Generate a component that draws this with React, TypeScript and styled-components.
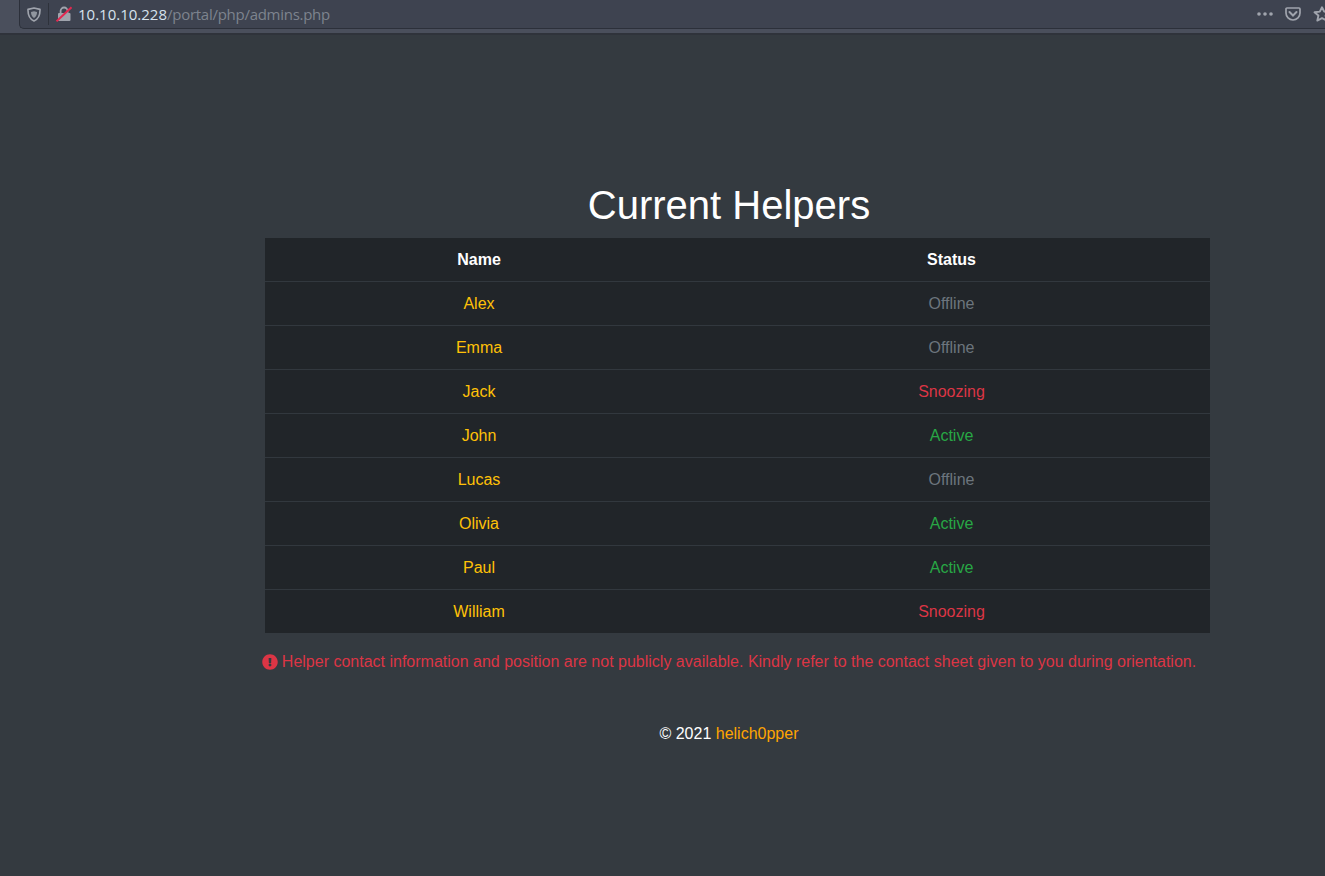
import React from "react";
import styled, { createGlobalStyle } from "styled-components";

const Global = createGlobalStyle`
  html, body { margin: 0; padding: 0; background: #343a40; overflow: hidden; }
  body { font-family: "Liberation Sans", Arial, sans-serif; font-size: 16px; line-height: 24px; color: #fff; }
`;

const Page = styled.div`
  width: 1325px;
  height: 876px;
  overflow: hidden;
  display: flex;
  flex-direction: column;
`;

const Toolbar = styled.div`
  height: 35px;
  flex: none;
  box-sizing: border-box;
  background: #4a4f5c;
  border-bottom: 2px solid #2f333b;
  display: flex;
  align-items: flex-start;
  padding-left: 19px;
  overflow: hidden;
`;

const UrlBar = styled.div`
  flex: none;
  width: 1316px;
  height: 29px;
  box-sizing: border-box;
  background: #3e4350;
  border-left: 1px solid #2c303a;
  border-bottom: 1px solid #2c303a;
  border-bottom-left-radius: 5px;
  display: flex;
  align-items: center;
  font-family: "Open Sans", "Noto Sans", sans-serif;
  font-size: 15px;
  white-space: nowrap;
`;

const IconSlot = styled.span<{ $w: number }>`
  width: ${(p) => p.$w}px;
  flex: none;
  display: flex;
  align-items: center;
  justify-content: center;
`;

const Divider = styled.span`
  width: 1px;
  height: 22px;
  background: #2e323b;
  flex: none;
`;

const Host = styled.span`
  color: #d6e2ee;
`;

const UrlPath = styled.span`
  color: #7d838e;
  letter-spacing: -0.27px;
`;

const Spacer = styled.span`
  flex: 1;
`;

const Main = styled.main`
  width: 936px;
  margin-left: 261px;
  padding-top: 146px;
  display: flex;
  flex-direction: column;
  align-items: flex-start;
`;

const Title = styled.h1`
  align-self: center;
  margin: 0 0 9px;
  font-size: 40px;
  font-weight: 400;
  line-height: 48px;
  color: #fff;
`;

const Table = styled.table`
  width: 945px;
  margin-left: 4px;
  flex: none;
  border-collapse: separate;
  border-spacing: 0;
  table-layout: fixed;
  background: #212529;
  color: #fff;
  text-align: center;
`;

const HeadCell = styled.th`
  height: 43px;
  padding: 0;
  font-weight: 700;
  box-sizing: border-box;
`;

const NameCell = styled.td`
  height: 44px;
  padding: 0;
  box-sizing: border-box;
  border-top: 1px solid #32383e;
  color: #ffc107;
`;

const statusColors = { Offline: "#6c757d", Snoozing: "#dc3545", Active: "#28a745" };
type Status = keyof typeof statusColors;

const StatusCell = styled.td<{ $status: Status }>`
  height: 44px;
  padding: 0;
  box-sizing: border-box;
  border-top: 1px solid #32383e;
  color: ${(p) => statusColors[p.$status]};
`;

const Notice = styled.p`
  align-self: center;
  margin: 17px 0 0;
  color: #dc3545;
  white-space: nowrap;
  display: flex;
  align-items: center;
  gap: 4px;
`;

const Footer = styled.footer`
  align-self: center;
  margin-top: 48px;
  color: #fff;
`;

const Credit = styled.span`
  color: #ffa500;
`;

const helpers: [string, Status][] = [
  ["Alex", "Offline"],
  ["Emma", "Offline"],
  ["Jack", "Snoozing"],
  ["John", "Active"],
  ["Lucas", "Offline"],
  ["Olivia", "Active"],
  ["Paul", "Active"],
  ["William", "Snoozing"],
];

const iconGray = "#a0a4ad";

const Shield = () => (
  <svg width="14" height="15" viewBox="0 0 14 15" fill="none">
    <path d="M7 1 L13 2.4 C13.2 8 11.5 12 7 14 C2.5 12 0.8 8 1 2.4 Z" stroke={iconGray} strokeWidth="1.6" strokeLinejoin="round" />
    <path d="M7 4.2 L10 5 C10 7.8 9 9.8 7 10.9 C5 9.8 4 7.8 4 5 Z" fill={iconGray} fillOpacity="0.85" />
  </svg>
);

const BrokenLock = () => (
  <svg width="16" height="16" viewBox="0 0 16 16" fill="none">
    <path d="M4.6 7.5 V5 a3.5 3.5 0 0 1 7 0 V7.5" stroke={iconGray} strokeWidth="1.8" />
    <path d="M3 7 H13.5 a1 1 0 0 1 1 1 V14 a1 1 0 0 1 -1 1 H3 a1 1 0 0 1 -1 -1 V8 a1 1 0 0 1 1 -1 Z" fill={iconGray} />
    <path d="M0.5 15.3 L15.5 1.3" stroke="#e22850" strokeWidth="2" />
  </svg>
);

const Dots = () => (
  <svg width="16" height="4" viewBox="0 0 16 4" fill={iconGray}>
    <circle cx="2" cy="2" r="1.8" />
    <circle cx="8" cy="2" r="1.8" />
    <circle cx="14" cy="2" r="1.8" />
  </svg>
);

const Pocket = () => (
  <svg width="16" height="14" viewBox="0 0 16 14" fill="none" stroke={iconGray}>
    <path d="M1 2 a1 1 0 0 1 1 -1 H14 a1 1 0 0 1 1 1 V6 a7 7 0 0 1 -14 0 Z" strokeWidth="1.7" />
    <path d="M4.5 5 L8 8.5 L11.5 5" strokeWidth="2" strokeLinecap="round" />
  </svg>
);

const Star = () => (
  <svg width="18" height="16" viewBox="0 0 18 16" fill="none" stroke={iconGray} strokeWidth="1.9">
    <path d="M9 1.3 L11.2 5.6 L16.5 6.3 L12.6 9.6 L13.7 14.6 L9 12.1 L4.3 14.6 L5.4 9.6 L1.5 6.3 L6.8 5.6 Z" strokeLinejoin="round" />
  </svg>
);

const AlertIcon = () => (
  <svg width="16" height="16" viewBox="0 0 512 512" fill="#dc3545">
    <path d="M504 256c0 136.997-111.043 248-248 248S8 392.997 8 256C8 119.083 119.043 8 256 8s248 111.083 248 248zm-248 50c-25.405 0-46 20.595-46 46s20.595 46 46 46 46-20.595 46-46-20.595-46-46-46zm-43.673-165.346l7.418 136c.347 6.364 5.609 11.346 11.982 11.346h48.546c6.373 0 11.635-4.982 11.982-11.346l7.418-136c.375-6.874-5.098-12.654-11.982-12.654h-63.383c-6.884 0-12.356 5.78-11.981 12.654z" />
  </svg>
);

export default function App() {
  return (
    <Page>
      <Global />
      <Toolbar>
        <UrlBar>
          <IconSlot $w={28}><Shield /></IconSlot>
          <Divider />
          <IconSlot $w={29}><BrokenLock /></IconSlot>
          <Host>10.10.10.228</Host>
          <UrlPath>/portal/php/admins.php</UrlPath>
          <Spacer />
          <IconSlot $w={24}><Dots /></IconSlot>
          <IconSlot $w={32}><Pocket /></IconSlot>
          <IconSlot $w={26}><Star /></IconSlot>
        </UrlBar>
      </Toolbar>
      <Main>
        <Title>Current Helpers</Title>
        <Table>
          <colgroup>
            <col width={428} />
            <col width={517} />
          </colgroup>
          <thead>
            <tr>
              <HeadCell>Name</HeadCell>
              <HeadCell>Status</HeadCell>
            </tr>
          </thead>
          <tbody>
            {helpers.map(([name, status]) => (
              <tr key={name}>
                <NameCell>{name}</NameCell>
                <StatusCell $status={status}>{status}</StatusCell>
              </tr>
            ))}
          </tbody>
        </Table>
        <Notice>
          <AlertIcon />
          Helper contact information and position are not publicly available. Kindly refer to the contact sheet given to you during orientation.
        </Notice>
        <Footer>
          © 2021 <Credit>helich0pper</Credit>
        </Footer>
      </Main>
    </Page>
  );
}
